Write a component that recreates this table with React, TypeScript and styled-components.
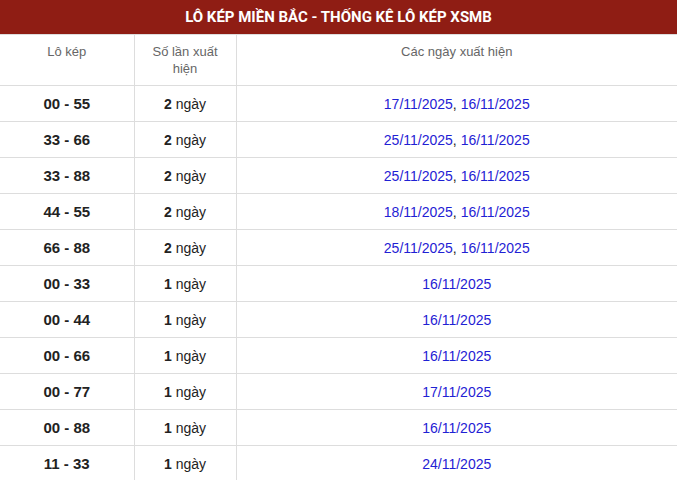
import styled, { createGlobalStyle } from "styled-components";

const GlobalStyle = createGlobalStyle`
  body {
    margin: 0;
    background: #fff;
    font-family: "Liberation Sans", Arial, sans-serif;
  }
`;

type Row = { pair: string; count: number; dates: string[] };

const rows: Row[] = [
  { pair: "00 - 55", count: 2, dates: ["17/11/2025", "16/11/2025"] },
  { pair: "33 - 66", count: 2, dates: ["25/11/2025", "16/11/2025"] },
  { pair: "33 - 88", count: 2, dates: ["25/11/2025", "16/11/2025"] },
  { pair: "44 - 55", count: 2, dates: ["18/11/2025", "16/11/2025"] },
  { pair: "66 - 88", count: 2, dates: ["25/11/2025", "16/11/2025"] },
  { pair: "00 - 33", count: 1, dates: ["16/11/2025"] },
  { pair: "00 - 44", count: 1, dates: ["16/11/2025"] },
  { pair: "00 - 66", count: 1, dates: ["16/11/2025"] },
  { pair: "00 - 77", count: 1, dates: ["17/11/2025"] },
  { pair: "00 - 88", count: 1, dates: ["16/11/2025"] },
  { pair: "11 - 33", count: 1, dates: ["24/11/2025"] },
];

function App() {
  return (
    <>
      <GlobalStyle />
      <Wrapper>
        <Title>LÔ KÉP MIỀN BẮC - THỐNG KÊ LÔ KÉP XSMB</Title>
        <StyledTable>
          <colgroup>
            <col style={{ width: 134 }} />
            <col style={{ width: 102 }} />
            <col />
          </colgroup>
          <thead>
            <tr>
              <HeadCell>Lô kép</HeadCell>
              <HeadCell>Số lần xuất hiện</HeadCell>
              <HeadCell>Các ngày xuất hiện</HeadCell>
            </tr>
          </thead>
          <tbody>
            {rows.map((r) => (
              <tr key={r.pair}>
                <PairCell>{r.pair}</PairCell>
                <TableCell>
                  <strong>{r.count}</strong> ngày
                </TableCell>
                <TableCell>
                  {r.dates.map((d, i) => (
                    <span key={d + i}>
                      {i > 0 && ", "}
                      <DateLink>{d}</DateLink>
                    </span>
                  ))}
                </TableCell>
              </tr>
            ))}
          </tbody>
        </StyledTable>
      </Wrapper>
    </>
  );
}
export default App;

const Wrapper = styled.div`
  width: 677px;
`;

const Title = styled.h2`
  margin: 0;
  height: 34px;
  line-height: 34px;
  background: #8f1d14;
  color: #fff;
  text-align: center;
  font-family: Roboto, "Liberation Sans", sans-serif;
  font-weight: 700;
  font-size: 15px;
  border-bottom: 1px solid #ddd;
`;

const StyledTable = styled.table`
  width: 100%;
  border-spacing: 0;
  border-collapse: collapse;
  table-layout: fixed;
`;

const HeadCell = styled.th`
  font-weight: 400;
  font-size: 13px;
  line-height: 17px;
  color: #666;
  padding: 8px 10px;
  height: 34px;
  vertical-align: top;
  text-align: center;
  border-right: 1px solid #ddd;
  border-bottom: 1px solid #ddd;
  &:last-child {
    border-right: none;
  }
`;

const TableCell = styled.td`
  height: 35px;
  padding: 0 8px;
  text-align: center;
  vertical-align: middle;
  font-size: 14px;
  color: #222;
  border-right: 1px solid #ddd;
  border-bottom: 1px solid #ddd;
  &:last-child {
    border-right: none;
  }
  strong {
    font-weight: 700;
  }
`;

const PairCell = styled(TableCell)`
  font-size: 15px;
  font-weight: 700;
`;

const DateLink = styled.a`
  color: #1f22d4;
  text-decoration: none;
`;
